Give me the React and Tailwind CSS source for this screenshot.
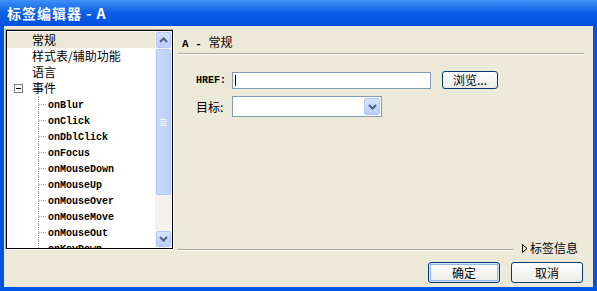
import React from 'react';

const cjk = { fontFamily: '"SimSun", "Noto Sans CJK SC", sans-serif' };
const mono = { fontFamily: '"Liberation Mono", "DejaVu Sans Mono", monospace' };

const events = [
  'onBlur',
  'onClick',
  'onDblClick',
  'onFocus',
  'onMouseDown',
  'onMouseUp',
  'onMouseOver',
  'onMouseMove',
  'onMouseOut',
  'onKeyDown',
];

const Chevron = ({ up }) => (
  <svg width="9" height="6" viewBox="0 0 9 6">
    <path
      d={up ? 'M1 5 L4.5 1.5 L8 5' : 'M1 1 L4.5 4.5 L8 1'}
      fill="none"
      stroke="#4d6185"
      strokeWidth="2"
    />
  </svg>
);

const ScrollButton = ({ up }) => (
  <div className="w-[15px] h-[16px] mx-[1px] rounded-[2px] border border-[#b4c8f6] bg-gradient-to-b from-[#d6e2fd] to-[#b9cdf9] flex items-center justify-center">
    <Chevron up={up} />
  </div>
);

const XpButton = ({ children, isDefault }) => (
  <button
    className={`w-[72px] h-[21px] rounded-[3px] border border-[#003c74] bg-gradient-to-b from-[#ffffff] to-[#ecebe6] text-[12px] text-black flex items-center justify-center ${
      isDefault ? 'shadow-[inset_0_0_0_1px_#cee7ff,inset_0_0_0_2px_#98b8ea]' : ''
    }`}
    style={cjk}
  >
    {children}
  </button>
);

const TreeRow = ({ children, selected }) => (
  <div className={`h-[16px] flex items-center pl-[25px] text-[12px] text-black ${selected ? 'bg-[#ece9d8]' : ''}`} style={cjk}>
    {children}
  </div>
);

const Tree = () => (
  <div className="ml-[1px] mt-[3px] w-[169px] h-[221px] border border-t-[#aca899] border-l-[#aca899] border-b-white border-r-white">
    <div className="w-full h-full border border-black bg-white flex">
      <div className="flex-1 pt-[1px] overflow-hidden">
        <TreeRow selected>常规</TreeRow>
        <TreeRow>样式表/辅助功能</TreeRow>
        <TreeRow>语言</TreeRow>
        <div className="h-[16px] flex items-center pl-[7px] text-[12px] text-black" style={cjk}>
          <div className="w-[9px] h-[9px] border border-[#7a7a7a] flex items-center justify-center">
            <div className="w-[5px] h-[1px] bg-black" />
          </div>
          <span className="ml-[9px]">事件</span>
        </div>
        {events.map((name) => (
          <div key={name} className="h-[16px] flex items-stretch pl-[31px] text-[10px] text-black" style={mono}>
            <div className="w-[10px] border-l border-dotted border-[#9c9c9c]">
              <div className="mt-[8px] w-[7px] border-t border-dotted border-[#9c9c9c]" />
            </div>
            <span className="leading-[16px] pt-[2px] font-bold">{name}</span>
          </div>
        ))}
      </div>
      <div className="w-[17px] bg-[#f4f2ec] flex flex-col py-[1px]">
        <ScrollButton up />
        <div className="mt-[1px] mx-[1px] h-[146px] rounded-[2px] border border-[#b4c8f6] bg-gradient-to-r from-[#c9d8fc] to-[#bdd0fb] flex flex-col items-center justify-center gap-[1px]">
          <div className="w-[7px] h-[1px] bg-[#eef3fe]" />
          <div className="w-[7px] h-[1px] bg-[#eef3fe]" />
          <div className="w-[7px] h-[1px] bg-[#eef3fe]" />
          <div className="w-[7px] h-[1px] bg-[#eef3fe]" />
        </div>
        <div className="flex-1" />
        <ScrollButton />
      </div>
    </div>
  </div>
);

const General = () => (
  <div className="ml-[3px] mt-[3px] w-[407px] h-[227px] flex flex-col">
    <div className="pt-[5px] pl-[5px] h-[16px] leading-[16px] text-[12px] text-black box-content" style={cjk}>
      <span style={mono} className="text-[11px] font-bold">A - </span>常规
    </div>
    <div className="mt-[3px] h-[1px] bg-[#aca899]" />
    <div className="h-[1px] bg-white" />

    <div className="mt-[16px] flex items-center pl-[19px]">
      <span className="w-[36px] text-[10px] font-bold text-black" style={mono}>HREF:</span>
      <div className="w-[199px] h-[17px] border border-[#7f9db9] bg-white flex items-center pl-[2px]">
        <div className="w-[1px] h-[11px] bg-black" />
      </div>
      <button
        className="ml-[11px] w-[56px] h-[18px] rounded-[3px] border border-[#003c74] bg-gradient-to-b from-white to-[#ecebe6] text-[12px] text-black flex items-center justify-center"
        style={cjk}
      >
        浏览...
      </button>
    </div>

    <div className="mt-[7px] flex items-center pl-[19px]">
      <span className="w-[36px] text-[12px] text-black" style={cjk}>目标:</span>
      <div className="w-[150px] h-[21px] border border-[#7f9db9] bg-white flex justify-end p-[1px]">
        <div className="w-[16px] rounded-[2px] border border-[#b4c8f6] bg-gradient-to-b from-[#d6e2fd] to-[#b9cdf9] flex items-center justify-center">
          <Chevron />
        </div>
      </div>
    </div>

    <div className="flex-1" />
    <div className="h-[16px] flex items-center">
      <div className="w-[336px] mt-[4px]">
        <div className="h-[1px] bg-[#aca899]" />
        <div className="h-[1px] bg-white" />
      </div>
      <div className="ml-[9px] flex items-center text-[12px] text-black" style={cjk}>
        <svg width="6" height="9" viewBox="0 0 6 9" className="mr-[2px]">
          <path d="M0.5 0.5 L5 4.5 L0.5 8.5 Z" fill="none" stroke="black" strokeWidth="1" />
        </svg>
        标签信息
      </div>
    </div>
  </div>
);

export default function App() {
  return (
    <div className="w-[597px] h-[291px] bg-[#0054e3] flex flex-col overflow-hidden">
      <div className="h-[26px] bg-gradient-to-b from-[#3d8ff7] via-[#0a5ee6] to-[#0250e0] flex items-center pl-[7px]">
        <span className="text-[14px] font-bold text-white tracking-[1px]" style={cjk}>
          标签编辑器 - A
        </span>
      </div>
      <div className="mx-[4px] h-[261px] bg-[#ece9d8] flex flex-col">
        <div className="flex items-start">
          <Tree />
          <General />
        </div>
        <div className="mt-[6px] flex justify-end gap-[11px] pr-[10px]">
          <XpButton isDefault>确定</XpButton>
          <XpButton>取消</XpButton>
        </div>
      </div>
    </div>
  );
}
